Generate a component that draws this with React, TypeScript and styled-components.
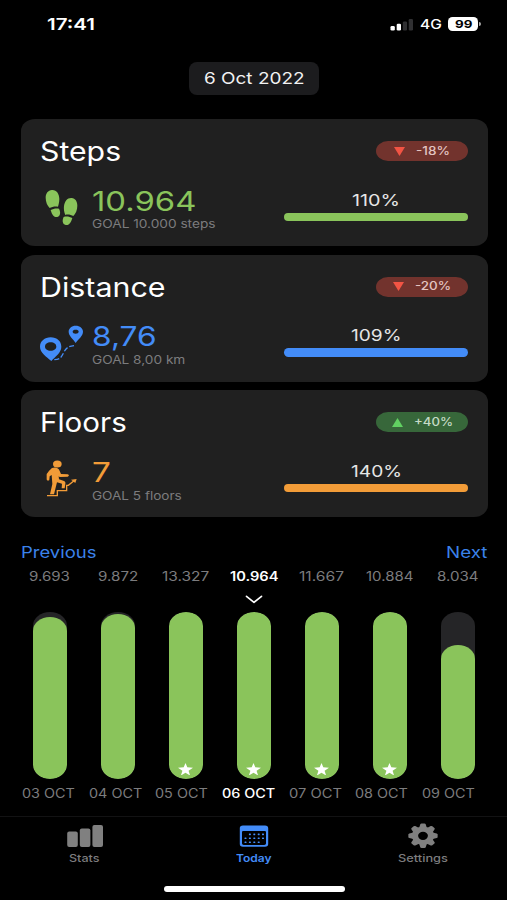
import React, { useLayoutEffect, useRef, useState } from "react";
import styled, { createGlobalStyle } from "styled-components";

const GlobalStyle = createGlobalStyle`
  * { box-sizing: border-box; }
  html, body { margin: 0; background: #000; }
  body { font-family: Inter, "Liberation Sans", sans-serif; overflow: hidden; }
`;

const colors = {
  green: "#8ac45b",
  blue: "#438cf8",
  orange: "#f29c38",
  card: "#202020",
  muted: "#7c7c7e",
};

/* Wide lettering: the word is stretched sideways to fill the given width. */
const WideBox = styled.span<{ $width: number; $size: number; $weight: number; $color: string }>`
  display: block;
  flex: none;
  width: ${(p) => p.$width}px;
  height: ${(p) => Math.round(p.$size * 1.2)}px;
  line-height: ${(p) => Math.round(p.$size * 1.2)}px;
  font-size: ${(p) => p.$size}px;
  font-weight: ${(p) => p.$weight};
  color: ${(p) => p.$color};
  text-align: left;
  white-space: nowrap;
`;
const WideInner = styled.span`
  display: inline-block;
  transform-origin: 0 50%;
`;

type WideProps = { width: number; size: number; weight?: number; color?: string; children: string };

function Wide({ width, size, weight = 400, color = "#fff", children }: WideProps) {
  const ref = useRef<HTMLSpanElement>(null);
  const [scale, setScale] = useState(1.15);
  useLayoutEffect(() => {
    if (ref.current) setScale(width / ref.current.offsetWidth);
  }, [width, size, children]);
  return (
    <WideBox $width={width} $size={size} $weight={weight} $color={color}>
      <WideInner ref={ref} style={{ transform: `scaleX(${scale})` }}>
        {children}
      </WideInner>
    </WideBox>
  );
}

const Screen = styled.main`
  display: flex;
  flex-direction: column;
  width: 507px;
  height: 900px;
  background: #000;
  overflow: hidden;
`;

const StatusBar = styled.header`
  display: flex;
  align-items: center;
  justify-content: space-between;
  height: 48px;
  padding: 0 26px 0 46.5px;
`;
const StatusIcons = styled.div`
  display: flex;
  align-items: center;
`;
const SignalIcon = styled.svg`
  width: 23px;
  height: 13px;
  margin-right: 6.5px;
`;
const Battery = styled.div`
  display: flex;
  align-items: center;
  justify-content: center;
  width: 30px;
  height: 14px;
  margin-left: 7px;
  border-radius: 4.5px;
  background: #fff;
`;
const BatteryTip = styled.div`
  width: 2px;
  height: 4px;
  margin-left: 1px;
  border-radius: 0 2px 2px 0;
  background: #aaa;
`;

const DateChip = styled.button`
  display: flex;
  align-items: center;
  justify-content: center;
  align-self: center;
  width: 130px;
  height: 33px;
  margin: 13.5px 0 24.5px 1px;
  padding: 0;
  border: 0;
  border-radius: 8px;
  background: #1c1c1e;
  font: inherit;
`;

const Cards = styled.section`
  display: flex;
  flex-direction: column;
  gap: 8.7px;
  padding: 0 19.5px 0 20.5px;
`;
const Card = styled.article`
  height: 127px;
  padding: 20px 19.5px 0 19.5px;
  border-radius: 14px / 12px;
  background: ${colors.card};
`;
const CardHeader = styled.div`
  display: flex;
  align-items: center;
  justify-content: space-between;
  height: 24px;
`;
const Badge = styled.div<{ $up: boolean }>`
  display: flex;
  align-items: center;
  justify-content: center;
  gap: 11px;
  width: 92px;
  height: 20px;
  border-radius: 12px / 10px;
  background: ${(p) => (p.$up ? "#37673a" : "#72332d")};
`;
const Arrow = styled.svg`
  width: 11px;
  height: 9px;
  flex: none;
`;
const CardBody = styled.div`
  display: flex;
  align-items: flex-start;
`;
const IconSlot = styled.svg`
  flex: none;
  width: 46.67px;
  height: 38.67px;
  margin: 25px 6.5px 0 -1px;
`;
const Figures = styled.div`
  display: flex;
  flex-direction: column;
  flex: 1;
  padding-top: 22.6px;
`;
const Gauge = styled.div`
  display: flex;
  flex-direction: column;
  align-items: center;
  width: 184px;
  padding-top: 26.5px;
`;
const GaugeBar = styled.div<{ $color: string }>`
  width: 100%;
  height: 8.4px;
  margin-top: 3px;
  border-radius: 4.5px;
  background: ${(p) => p.$color};
`;
const GoalLine = styled.div`
  margin-top: -0.4px;
`;

const Pager = styled.nav`
  display: flex;
  justify-content: space-between;
  padding: 25px 19.5px 0 20.5px;
`;

const Chart = styled.section`
  display: grid;
  grid-template-columns: repeat(7, 68px);
  padding: 7px 0 0 15.7px;
`;
const Day = styled.div`
  display: flex;
  flex-direction: column;
  align-items: center;
`;
const MarkerSlot = styled.div`
  display: flex;
  align-items: center;
  height: 27.5px;
  padding-top: 2px;
`;
const Chevron = styled.svg`
  width: 18px;
  height: 9px;
`;
const Track = styled.div`
  display: flex;
  flex-direction: column;
  justify-content: flex-end;
  width: 34px;
  height: 167px;
  border-radius: 17px / 14px;
  background: #252527;
  overflow: hidden;
`;
const Fill = styled.div`
  display: flex;
  align-items: flex-end;
  justify-content: center;
  padding-bottom: 3.7px;
  border-radius: 17px / 14px;
  background: ${colors.green};
`;
const Star = styled.svg`
  width: 15px;
  height: 12.5px;
  margin-right: 0.6px;
`;
const Dates = styled.div`
  display: flex;
  gap: 13.7px;
  padding: 7.4px 0 0 22px;
`;

const TabBar = styled.footer`
  display: grid;
  grid-template-columns: repeat(3, 169px);
  height: 56px;
  margin-top: 14.5px;
  border-top: 1px solid #121213;
`;
const Tab = styled.button`
  display: flex;
  flex-direction: column;
  align-items: center;
  padding: 5px 0 0 0;
  border: 0;
  background: none;
  font: inherit;
`;
const TabIcon = styled.svg`
  width: 40px;
  height: 28px;
  margin-bottom: 2px;
`;
const HomeIndicator = styled.div`
  width: 181px;
  height: 5.6px;
  margin: 14.6px 0 0 163.5px;
  border-radius: 3px;
  background: #fff;
`;

const StepsIcon = () => (
  <IconSlot viewBox="72 228 140 116" fill={colors.green}>
    <path d="M111 234C124 233 133 245 133 261C133 272 130 280 129 284C122 282 110 284 104 288C97 281 92 270 92 257C92 244 99 235 111 234Z" />
    <path d="M107 294C114 290 124 288 132 290C137 299 137 311 127 315C115 317 110 305 107 294Z" />
    <path d="M170 258C181 259 187 268 187 281C187 294 182 305 175 312C168 308 157 306 151 309C147 300 146 290 147 282C149 268 157 257 170 258Z" />
    <path d="M146 315C154 312 164 314 172 318C169 329 163 341 152 339C142 337 141 325 146 315Z" />
  </IconSlot>
);

const RouteIcon = () => (
  <IconSlot viewBox="72 227 140 116" fill={colors.blue}>
    <path fillRule="evenodd" d="M107 267C126 267 139 279 139 295C139 313 121 324 109 338C94 325 75 313 75 295C75 279 89 267 107 267ZM107 282C97 282 90 287 90 295C90 302 97 307 107 307C117 307 124 302 124 295C124 287 117 282 107 282Z" />
    <path fillRule="evenodd" d="M182 232C195 232 204 240 204 250C204 263 191 271 182 284C174 271 161 263 161 250C161 240 170 232 182 232ZM182 244C177 244 173 246 173 250C173 254 177 256 182 256C187 256 191 254 191 250C191 246 187 244 182 244Z" />
    <path d="M118 334C136 334 139 326 146 313C153 297 162 293 183 291" fill="none" stroke={colors.blue} strokeWidth="4" strokeDasharray="15 6" />
  </IconSlot>
);

const StairsIcon = () => (
  <IconSlot viewBox="72 226 140 116" fill={colors.orange}>
    <ellipse cx="127" cy="241" rx="13" ry="10.5" />
    <path d="M111 253C121 249 132 253 134 262L138 271L158 272C163 273 163 278 158 279L134 280L131 278L132 287L147 292C151 294 152 297 151 301L149 314H140L141 300L126 296L123 308L117 332H105L112 301L110 274L104 278L103 288C102 292 95 292 95 287V272C96 269 104 259 111 253Z" />
    <path d="M96 336H127V321H155V305H160L179 290" fill="none" stroke={colors.orange} strokeWidth="4" />
    <path d="M168 288L185 286L181 298Z" />
  </IconSlot>
);

const metrics = [
  { title: "Steps", titleW: 81, value: "10.964", valueW: 104.5, goal: "GOAL 10.000 steps", goalW: 123.5, pct: "110%", pctW: 48, delta: "-18%", deltaW: 34, up: false, color: colors.green, Icon: StepsIcon },
  { title: "Distance", titleW: 125, value: "8,76", valueW: 64.5, goal: "GOAL 8,00 km", goalW: 93, pct: "109%", pctW: 51, delta: "-20%", deltaW: 36, up: false, color: colors.blue, Icon: RouteIcon },
  { title: "Floors", titleW: 87, value: "7", valueW: 18.5, goal: "GOAL 5 floors", goalW: 90, pct: "140%", pctW: 51, delta: "+40%", deltaW: 39, up: true, color: colors.orange, Icon: StairsIcon },
];

const days = [
  { date: "03 OCT", count: "9.693", w: 41, level: 162, star: false },
  { date: "04 OCT", count: "9.872", w: 40, level: 165, star: false },
  { date: "05 OCT", count: "13.327", w: 47, level: 167, star: true },
  { date: "06 OCT", count: "10.964", w: 48, level: 167, star: true },
  { date: "07 OCT", count: "11.667", w: 45, level: 167, star: true },
  { date: "08 OCT", count: "10.884", w: 48, level: 167, star: true },
  { date: "09 OCT", count: "8.034", w: 41, level: 134, star: false },
];
const TODAY = 3;

const gearTeeth = [0, 45, 90, 135, 180, 225, 270, 315];

export default function App() {
  return (
    <Screen>
      <GlobalStyle />
      <StatusBar>
        <Wide width={48.5} size={16.5} weight={600}>17:41</Wide>
        <StatusIcons>
          <SignalIcon viewBox="0 0 23 13">
            <rect x="0.5" y="8" width="4.3" height="4.5" rx="1.3" fill="#fff" />
            <rect x="6.7" y="5.8" width="4.3" height="6.7" rx="1.3" fill="#fff" />
            <rect x="12.8" y="3.4" width="4.3" height="9.1" rx="1.3" fill="#303032" />
            <rect x="18.7" y="1" width="4.3" height="11.5" rx="1.3" fill="#303032" />
          </SignalIcon>
          <Wide width={21.5} size={13} weight={500}>4G</Wide>
          <Battery>
            <Wide width={17} size={11} weight={700} color="#000">99</Wide>
          </Battery>
          <BatteryTip />
        </StatusIcons>
      </StatusBar>

      <DateChip>
        <Wide width={101} size={16.5} color="#f2f2f2">6 Oct 2022</Wide>
      </DateChip>

      <Cards>
        {metrics.map((m) => (
          <Card key={m.title}>
            <CardHeader>
              <Wide width={m.titleW} size={26.5}>{m.title}</Wide>
              <Badge $up={m.up}>
                <Arrow viewBox="0 0 11 9">
                  <path d={m.up ? "M5.5 0L11 9H0Z" : "M0 0H11L5.5 9Z"} fill={m.up ? "#61d162" : "#f25444"} />
                </Arrow>
                <Wide width={m.deltaW} size={11.2} weight={500} color={m.up ? "#c6dbc6" : "#e3c5c2"}>{m.delta}</Wide>
              </Badge>
            </CardHeader>
            <CardBody>
              <m.Icon />
              <Figures>
                <Wide width={m.valueW} size={27} color={m.color}>{m.value}</Wide>
                <GoalLine>
                  <Wide width={m.goalW} size={11.3} color={colors.muted}>{m.goal}</Wide>
                </GoalLine>
              </Figures>
              <Gauge>
                <Wide width={m.pctW} size={16.5} color="#e6e6e6">{m.pct}</Wide>
                <GaugeBar $color={m.color} />
              </Gauge>
            </CardBody>
          </Card>
        ))}
      </Cards>

      <Pager>
        <Wide width={76} size={16.3} color="#3b82ea">Previous</Wide>
        <Wide width={41.5} size={16.3} color="#3b82ea">Next</Wide>
      </Pager>

      <Chart>
        {days.map((d, i) => (
          <Day key={d.date}>
            <Wide width={d.w} size={12.5} weight={i === TODAY ? 600 : 400} color={i === TODAY ? "#fff" : colors.muted}>{d.count}</Wide>
            <MarkerSlot>
              {i === TODAY && (
                <Chevron viewBox="0 0 18 9">
                  <path d="M1.5 1.3L9 7.3L16.5 1.3" fill="none" stroke="#fff" strokeWidth="1.7" strokeLinecap="round" strokeLinejoin="round" />
                </Chevron>
              )}
            </MarkerSlot>
            <Track>
              <Fill style={{ height: d.level }}>
                {d.star && (
                  <Star viewBox="0 0 15 12.5">
                    <path d="M7.5 0L9.3 4.3L15 4.7L10.6 7.8L12.1 12.5L7.5 9.8L2.9 12.5L4.4 7.8L0 4.7L5.7 4.3Z" fill="#fff" />
                  </Star>
                )}
              </Fill>
            </Track>
          </Day>
        ))}
      </Chart>
      <Dates>
        {days.map((d, i) => (
          <Wide key={d.date} width={53} size={12.5} weight={i === TODAY ? 500 : 400} color={i === TODAY ? "#fff" : colors.muted}>{d.date}</Wide>
        ))}
      </Dates>

      <TabBar>
        <Tab>
          <TabIcon viewBox="0 0 40 28" fill="#808080">
            <rect x="2.2" y="9.6" width="10.6" height="15.4" rx="2" />
            <rect x="14.8" y="6.4" width="10.6" height="18.6" rx="2" />
            <rect x="27.4" y="3" width="10.6" height="22" rx="2" />
          </TabIcon>
          <Wide width={31} size={10.5} weight={500} color={colors.muted}>Stats</Wide>
        </Tab>
        <Tab>
          <TabIcon viewBox="0 0 40 28">
            <path fillRule="evenodd" d="M9 3.4H31Q34.2 3.4 34.2 6V22Q34.2 24.8 31 24.8H9Q5.8 24.8 5.8 22V6Q5.8 3.4 9 3.4ZM9.2 9Q8 9 8 10V21.5Q8 22.9 9.8 22.9H30.2Q32 22.9 32 21.5V10Q32 9 30.8 9Z" fill={colors.blue} />
            {[11.5, 15.4, 19.4].map((y, row) =>
              [11.5, 15.9, 20.3, 24.7, 29].map((x, col) =>
                (row === 0 && col === 0) || (row === 2 && col === 4) ? null : (
                  <rect key={`${x}-${y}`} x={x - 1} y={y} width="2" height="1.7" rx="0.6" fill={colors.blue} />
                ),
              ),
            )}
          </TabIcon>
          <Wide width={35.5} size={10.5} weight={600} color={colors.blue}>Today</Wide>
        </Tab>
        <Tab>
          <TabIcon viewBox="0 0 40 28">
            <g transform="translate(20 13.8) scale(1.2 1)" fill="#808080">
              <path fillRule="evenodd" d="M0 -9.2A9.2 9.2 0 1 1 0 9.2A9.2 9.2 0 1 1 0 -9.2ZM0 -4.1A4.1 4.1 0 1 0 0 4.1A4.1 4.1 0 1 0 0 -4.1Z" />
              {gearTeeth.map((a) => (
                <path key={a} transform={`rotate(${a})`} d="M-3.2 -8L-2.3 -11.4Q-2 -12.2 -1.2 -12.2H1.2Q2 -12.2 2.3 -11.4L3.2 -8Z" />
              ))}
            </g>
          </TabIcon>
          <Wide width={50} size={10.5} weight={500} color={colors.muted}>Settings</Wide>
        </Tab>
      </TabBar>
      <HomeIndicator />
    </Screen>
  );
}
